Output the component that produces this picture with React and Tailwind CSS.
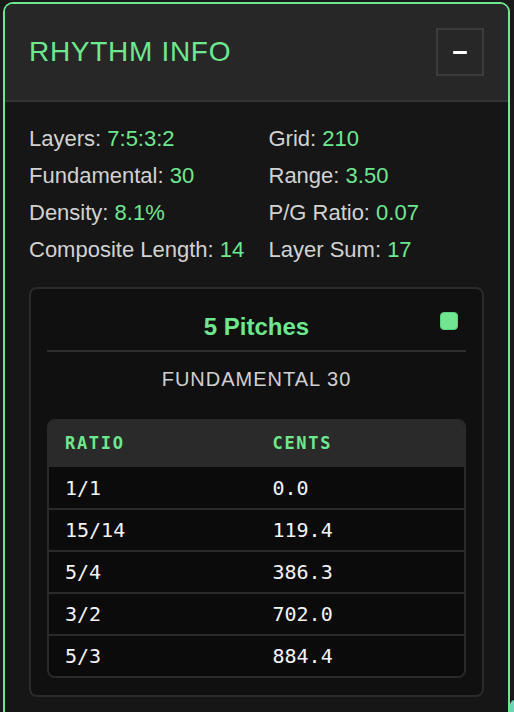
import React from "react";

const stats = [
  ["Layers:", "7:5:3:2"],
  ["Grid:", "210"],
  ["Fundamental:", "30"],
  ["Range:", "3.50"],
  ["Density:", "8.1%"],
  ["P/G Ratio:", "0.07"],
  ["Composite Length:", "14"],
  ["Layer Sum:", "17"],
];

const rows = [
  ["1/1", "0.0"],
  ["15/14", "119.4"],
  ["5/4", "386.3"],
  ["3/2", "702.0"],
  ["5/3", "884.4"],
];

export default function App() {
  return (
    <div className="relative h-[712px] w-[514px] overflow-hidden bg-[#1a1a1a] pl-[3px] pt-[2px] font-['Liberation_Sans',Arial,sans-serif]">
      <div className="w-[507px] overflow-hidden rounded-t-[10px] border-2 border-b-0 border-[#6ee88f] bg-[#161616]">
        <div className="flex h-[98px] items-center justify-between border-b-2 border-[#333333] bg-[#272727] px-6">
          <h1 className="text-[28px] leading-none tracking-[0.7px] text-[#6ee88f]">RHYTHM INFO</h1>
          <button className="flex h-[48px] w-[48px] items-center justify-center border-2 border-[#3b3b3b] bg-[#272727]">
            <span className="block h-[3px] w-[14px] rounded-[1px] bg-white" />
          </button>
        </div>
        <div className="px-6 pt-6 pb-10">
          <div className="grid grid-cols-2 gap-x-6 gap-y-3 text-[22px] leading-[25px]">
            {stats.map(([k, v]) => (
              <div key={k} className="whitespace-nowrap text-[#d2d2d2]">
                {k} <span className="text-[#6ee88f]">{v}</span>
              </div>
            ))}
          </div>
          <div className="mt-[25px] rounded-[8px] border-2 border-[#2b2b2b] bg-[#101010] px-4 pt-4 pb-[17px]">
            <div className="relative flex h-[47px] items-center justify-center border-b-2 border-[#2e2e2e] pb-[2px]">
              <span className="text-[24px] font-bold leading-none text-[#6ee88f]">5 Pitches</span>
              <span className="absolute right-[8px] top-[7px] h-[18px] w-[18px] rounded-[4px] border border-[#58d47b] bg-[#72e591]" />
            </div>
            <div className="mt-4 text-center text-[20px] leading-[22px] tracking-[0.05em] text-[#d0d0d0]">
              FUNDAMENTAL 30
            </div>
            <div className="mt-[29px] overflow-hidden rounded-[8px] border-2 border-[#2a2a2a] font-['DejaVu_Sans_Mono',monospace]">
              <div className="grid h-[46px] grid-cols-2 items-center bg-[#2a2a2a] text-[17px] font-bold tracking-[0.1em] text-[#6ee88f]">
                <div className="pl-4">RATIO</div>
                <div className="pl-4">CENTS</div>
              </div>
              {rows.map(([r, c], i) => (
                <div
                  key={r}
                  className={
                    i === 0
                      ? "grid h-[41px] grid-cols-2 items-center bg-[#0b0b0b] text-[20px] text-[#f4f4f4]"
                      : "grid h-[42px] grid-cols-2 items-center border-t-2 border-[#2a2a2a] bg-[#0b0b0b] text-[20px] text-[#f4f4f4]"
                  }
                >
                  <div className="pl-4">{r}</div>
                  <div className="pl-4">{c}</div>
                </div>
              ))}
            </div>
          </div>
        </div>
      </div>
      <span className="absolute left-[510px] top-[700px] h-[16px] w-[10px] rounded-full bg-[#6fd3b6]" />
    </div>
  );
}
